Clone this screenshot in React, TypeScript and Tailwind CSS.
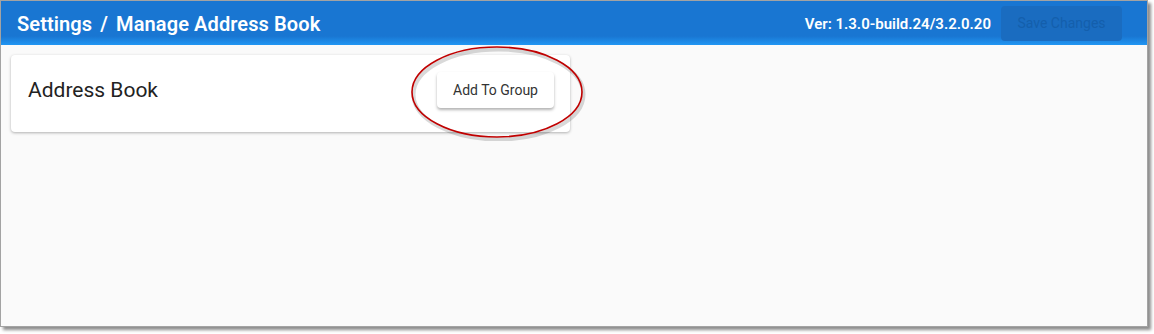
export default function App() {
  return (
    <div className="h-[334px] w-[1154px] bg-white font-['Roboto',sans-serif]">
      <div className="h-[327px] w-[1148px] border border-[#a3a3a3] bg-[#fafafa] shadow-[3px_3px_3px_rgba(0,0,0,0.45)]">
        <div className="flex h-[44px] items-center justify-between bg-gradient-to-b from-[#1976d2] from-[80%] to-[#2196f3] pl-[16px] pr-[25px] pt-[2px]">
          <h1 className="text-[20px] font-semibold tracking-[0.1px] text-white">
            Settings <span className="mx-[3px]">/</span> Manage Address Book
          </h1>
          <div className="flex items-center gap-[10px]">
            <span className="text-[15px] font-semibold text-white">Ver: 1.3.0-build.24/3.2.0.20</span>
            <button
              type="button"
              disabled
              className="mb-[2px] h-[35px] w-[121px] rounded-[4px] bg-[#1a6cc0] text-[14px] text-[#145fac]"
            >
              Save Changes
            </button>
          </div>
        </div>

        <div className="px-[10px] pt-[10px]">
          <div className="relative flex h-[77px] w-[559px] items-center justify-between rounded-[4px] bg-white pl-[17px] pr-[16px] shadow-[0_1px_3px_rgba(0,0,0,0.3)]">
            <h2 className="mb-[6px] text-[21px] text-[#222]">Address Book</h2>
            <button
              type="button"
              className="mb-[7px] h-[36px] w-[117px] rounded-[4px] bg-white text-[14px] text-[#333] shadow-[0_2px_3px_rgba(0,0,0,0.3)]"
            >
              Add To Group
            </button>
            <svg
              className="pointer-events-none absolute left-[399px] top-[-10px]"
              width="176"
              height="96"
              viewBox="0 0 176 96"
            >
              <ellipse cx="87" cy="48" rx="85" ry="45" fill="none" stroke="#000" strokeOpacity="0.15" strokeWidth="4" transform="translate(1.5 1.5)" />
              <ellipse cx="87" cy="47" rx="85" ry="45" fill="none" stroke="#c00000" strokeWidth="1.6" />
            </svg>
          </div>
        </div>
      </div>
    </div>
  );
}
